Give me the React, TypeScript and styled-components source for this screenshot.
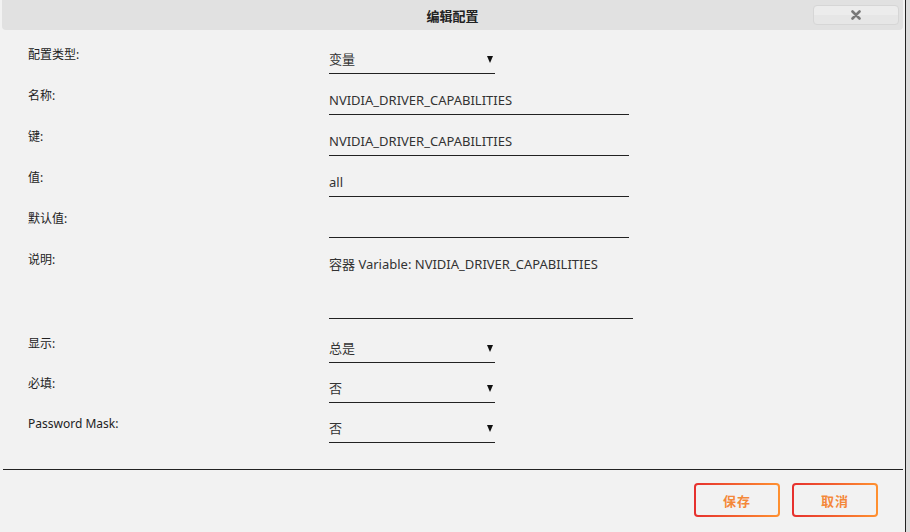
import React from "react";
import styled, { createGlobalStyle } from "styled-components";

const Global = createGlobalStyle`
  html, body { margin: 0; padding: 0; background: #dcdcdc; }
  body { font-family: "Noto Sans", "Noto Sans CJK SC", sans-serif; }
  * { box-sizing: border-box; }
`;

const Dialog = styled.div`
  width: 906px;
  height: 532px;
  background: #f2f2f2;
  border-right: 1px solid #222;
  display: flex;
  flex-direction: column;
`;

const Header = styled.div`
  margin: 0 2px;
  height: 30px;
  background: #e1e1e1;
  border-radius: 0 0 4px 4px;
  display: grid;
  grid-template-columns: 1fr auto 1fr;
  align-items: center;
`;

const Title = styled.div`
  grid-column: 2;
  font-size: 13px;
  font-weight: bold;
  color: #222;
`;

const CloseButton = styled.button`
  grid-column: 3;
  justify-self: end;
  margin-right: 4px;
  width: 86px;
  height: 20px;
  border: 1px solid #d6d6d6;
  border-radius: 4px;
  background: linear-gradient(#ececec 0%, #ececec 50%, #e6e6e6 50%, #e6e6e6 100%);
  display: flex;
  align-items: center;
  justify-content: center;
  padding: 0;
`;

const Body = styled.div`
  height: 439px;
  padding: 17px 0 0 28px;
  display: flex;
  flex-direction: column;
`;

const Row = styled.div<{ $h: number }>`
  height: ${(p) => p.$h}px;
  display: grid;
  grid-template-columns: 301px auto;
  align-items: start;
`;

const Label = styled.div`
  font-size: 12px;
  line-height: 16px;
  color: #222;
`;

const Field = styled.div<{ $w: number; $h?: number }>`
  width: ${(p) => p.$w}px;
  height: ${(p) => (p.$h ? p.$h : 23)}px;
  margin-top: 4px;
  padding-bottom: 6px;
  border-bottom: 1px solid #222;
  font-size: 13px;
  line-height: 16px;
  color: #333;
  display: flex;
  align-items: flex-start;
  justify-content: space-between;
`;

const Arrow = styled.svg`
  margin: 5px 2px 0 0;
`;

const Footer = styled.div`
  margin: 0 2px 0 3px;
  border-top: 1px solid #222;
  padding: 13px 25px 0 0;
  display: flex;
  justify-content: flex-end;
  gap: 12px;
`;

const ActionButton = styled.button`
  width: 86px;
  height: 34px;
  border: 2px solid transparent;
  border-radius: 4px;
  background: linear-gradient(#f2f2f2, #f2f2f2) padding-box,
    linear-gradient(90deg, #e6302e, #ff9130) border-box;
  color: #f4883a;
  font-family: "Noto Sans", "Noto Sans CJK SC", sans-serif;
  font-size: 13px;
  font-weight: bold;
  letter-spacing: 1px;
  padding: 0;
`;

const Select = ({ value }: { value: string }) => (
  <Field $w={166}>
    <span>{value}</span>
    <Arrow width="6" height="7" viewBox="0 0 6 7">
      <path d="M0 0 H6 L3 7 Z" fill="#111" />
    </Arrow>
  </Field>
);

export default function App() {
  return (
    <>
      <Global />
      <Dialog>
        <Header>
          <Title>编辑配置</Title>
          <CloseButton aria-label="close">
            <svg width="10" height="10" viewBox="0 0 10 10">
              <path d="M1.5 1.5 L8.5 8.5 M8.5 1.5 L1.5 8.5" stroke="#787878" strokeWidth="2.6" strokeLinecap="round" />
            </svg>
          </CloseButton>
        </Header>
        <Body>
          <Row $h={41}>
            <Label>配置类型:</Label>
            <Select value="变量" />
          </Row>
          <Row $h={41}>
            <Label>名称:</Label>
            <Field $w={300}>NVIDIA_DRIVER_CAPABILITIES</Field>
          </Row>
          <Row $h={41}>
            <Label>键:</Label>
            <Field $w={300}>NVIDIA_DRIVER_CAPABILITIES</Field>
          </Row>
          <Row $h={41}>
            <Label>值:</Label>
            <Field $w={300}>all</Field>
          </Row>
          <Row $h={41}>
            <Label>默认值:</Label>
            <Field $w={300}></Field>
          </Row>
          <Row $h={84}>
            <Label>说明:</Label>
            <Field $w={304} $h={63}>容器 Variable: NVIDIA_DRIVER_CAPABILITIES</Field>
          </Row>
          <Row $h={40}>
            <Label>显示:</Label>
            <Select value="总是" />
          </Row>
          <Row $h={40}>
            <Label>必填:</Label>
            <Select value="否" />
          </Row>
          <Row $h={40}>
            <Label>Password Mask:</Label>
            <Select value="否" />
          </Row>
        </Body>
        <Footer>
          <ActionButton>保存</ActionButton>
          <ActionButton>取消</ActionButton>
        </Footer>
      </Dialog>
    </>
  );
}
